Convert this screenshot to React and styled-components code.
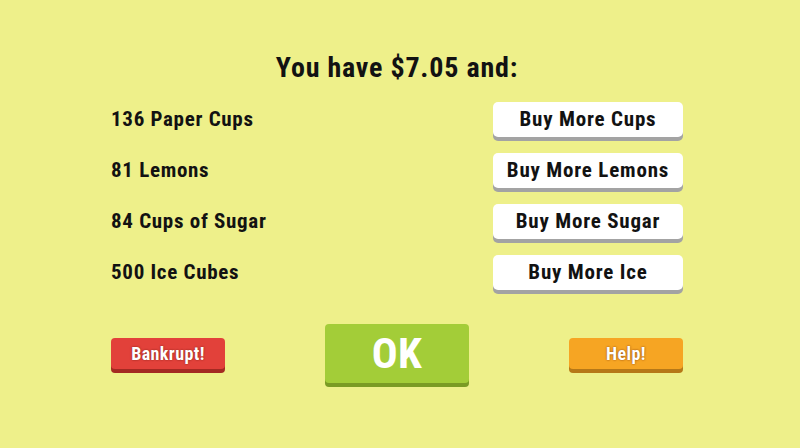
import React from 'react'
import styled, { createGlobalStyle, css } from 'styled-components'

const GlobalStyle = createGlobalStyle`
  html, body {
    margin: 0;
    padding: 0;
    background: #eef08a;
  }
  body {
    font-family: "Roboto Condensed", Roboto, "Liberation Sans", sans-serif;
    color: #121212;
  }
`

const Screen = styled.div`
  box-sizing: border-box;
  width: 800px;
  height: 448px;
  padding: 52px 117px 0 111px;
  display: flex;
  flex-direction: column;
`

const Title = styled.h1`
  margin: 0 0 18px;
  font-size: 28px;
  line-height: 32px;
  font-weight: 700;
  letter-spacing: 0.8px;
  text-align: center;
`

const Supplies = styled.div`
  display: flex;
  flex-direction: column;
  gap: 16px;
`

const SupplyRow = styled.div`
  display: flex;
  align-items: center;
  justify-content: space-between;
  height: 35px;
`

const Label = styled.span`
  font-size: 21px;
  font-weight: 700;
  letter-spacing: 0.7px;
  line-height: 35px;
`

const BuyButton = styled.button`
  width: 190px;
  height: 35px;
  padding: 0;
  border: none;
  border-radius: 5px;
  background: #fff;
  box-shadow: 0 4px 0 #a3a3a3;
  font-family: inherit;
  font-size: 21px;
  font-weight: 700;
  letter-spacing: 0.8px;
  line-height: 35px;
  color: #121212;
  cursor: pointer;
`

const Actions = styled.div`
  margin-top: 34px;
  display: flex;
  align-items: center;
  justify-content: space-between;
`

const tones = {
  red: { bg: '#e2413a', edge: '#a42a22' },
  orange: { bg: '#f6a523', edge: '#b67817' },
  green: { bg: '#a3cd38', edge: '#7a9b24' },
}

const ActionButton = styled.button`
  padding: 0;
  border: none;
  border-radius: 4px;
  font-family: inherit;
  font-weight: 700;
  color: #fff;
  cursor: pointer;
  background: ${p => tones[p.$tone].bg};
  box-shadow: 0 4px 0 ${p => tones[p.$tone].edge};
  ${p => p.$big
    ? css`
        width: 144px;
        height: 59px;
        font-size: 43px;
        letter-spacing: 0.5px;
        line-height: 59px;
      `
    : css`
        width: 114px;
        height: 31px;
        font-size: 18px;
        letter-spacing: 0.4px;
        line-height: 31px;
        text-shadow: 0 0 2px rgba(90, 20, 10, 0.75);
      `}
`

const supplies = [
  { label: '136 Paper Cups', action: 'Buy More Cups' },
  { label: '81 Lemons', action: 'Buy More Lemons' },
  { label: '84 Cups of Sugar', action: 'Buy More Sugar' },
  { label: '500 Ice Cubes', action: 'Buy More Ice' },
]

export default function App() {
  return (
    <>
      <GlobalStyle />
      <Screen>
        <Title>You have $7.05 and:</Title>
        <Supplies>
          {supplies.map(s => (
            <SupplyRow key={s.label}>
              <Label>{s.label}</Label>
              <BuyButton>{s.action}</BuyButton>
            </SupplyRow>
          ))}
        </Supplies>
        <Actions>
          <ActionButton $tone="red">Bankrupt!</ActionButton>
          <ActionButton $tone="green" $big>OK</ActionButton>
          <ActionButton $tone="orange">Help!</ActionButton>
        </Actions>
      </Screen>
    </>
  )
}
